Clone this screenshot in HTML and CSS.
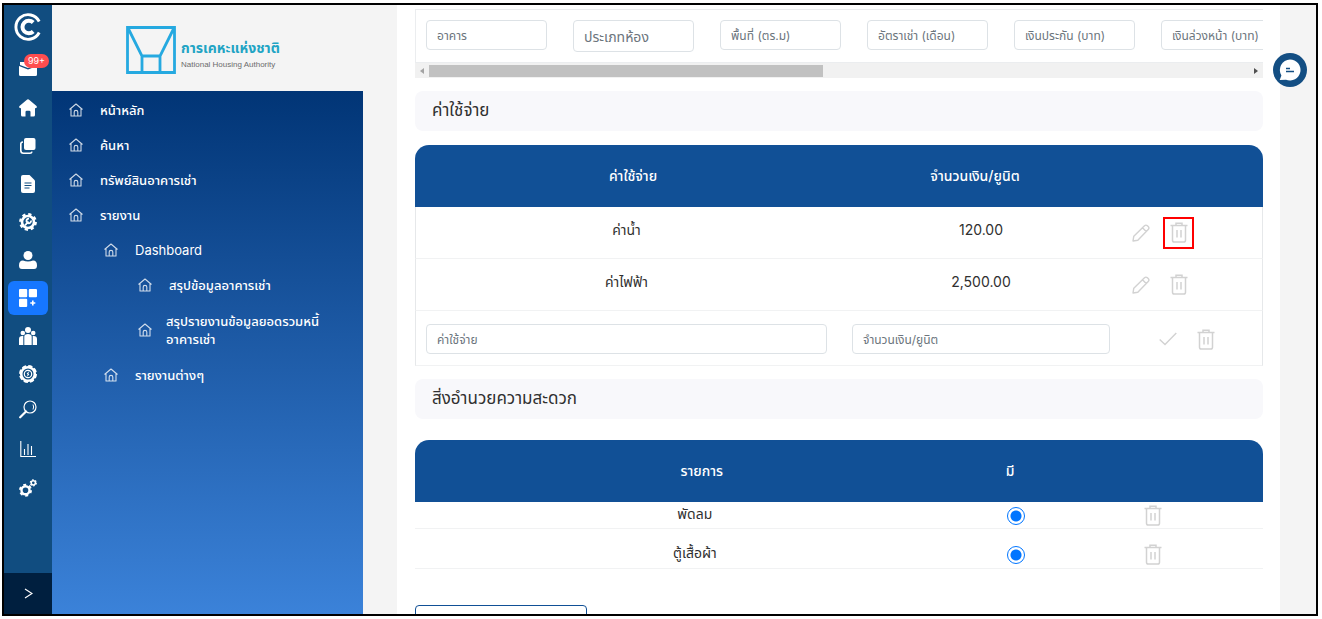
FILE: index.html
```html
<!DOCTYPE html>
<html lang="th">
<head>
<meta charset="utf-8">
<meta name="viewport" content="width=device-width, initial-scale=1">
<title>การเคหะแห่งชาติ</title>
<link rel="stylesheet" href="styles.css">
</head>
<body>
<svg width="0" height="0" class="sprite" aria-hidden="true">
  <symbol id="trash" viewBox="0 0 18 21"><path d="M.5 3.500h17M6 3V1.200h6V3M2.500 4v14.200c0 1.200.6 1.800 1.800 1.800h9.400c1.200 0 1.800-.6 1.800-1.800V4M7 8v7.500M11 8v7.500" fill="none" stroke="currentColor" stroke-width="1.500"/></symbol>
  <symbol id="pencil" viewBox="0 0 18 18"><path d="M1 17l.8-4.800L12.500 1.800c.9-.9 2-.9 2.900 0l.8.8c.9.9.9 2 0 2.900L5.800 16.200zM10.500 3.800l3.700 3.700" fill="none" stroke="currentColor" stroke-width="1.400" stroke-linejoin="round"/></symbol>
  <symbol id="check" viewBox="0 0 18 14"><path d="M.7 7.500l5.300 5L17.300 1" fill="none" stroke="currentColor" stroke-width="1.400"/></symbol>
  <symbol id="house" viewBox="0 0 14 14"><path d="M.5 6.500L7 1l6.500 5.500M2 5.500V13h10V5.500M5.200 13V9c0-1 .6-1.600 1.800-1.600S8.800 8 8.800 9v4" fill="none" stroke="currentColor" stroke-width="1.100" stroke-linejoin="round"/></symbol>
</svg>
<div class="frame">
  <nav class="rail" aria-label="เมนูหลัก">
    <a class="rail-logo" href="#" aria-label="โลโก้"><svg width="28" height="28" viewBox="0 0 28 28" fill="none" stroke="#fff"><path d="M25.200 8.500A12.300 12.300 0 1 0 25.200 19.500" stroke-width="2.900"/><path d="M19.200 9.500A6.300 6.300 0 1 0 19.200 18.500" stroke-width="4"/></svg></a>
    <a class="rail-mail" href="#"><svg width="18" height="14" viewBox="0 0 18 14" fill="#fff"><path d="M1 0h16v3l-8 3-8-3zM0 4l9 3.500L18 4v8.500q0 1.500-1.500 1.500h-15Q0 14 0 12.500z"/></svg><span class="badge">99+</span></a>
    <a class="rail-item" href="#" aria-label="หน้าแรก"><svg width="18" height="18" viewBox="0 0 18 18" fill="#fff"><path d="M7.600.9q1.400-1.200 2.800 0l6.800 5.900q1 .9.500 1.700t-1.700.6v6.900q0 1.500-1.500 1.500h-3v-4.500q0-1.300-1.300-1.300H7.800q-1.300 0-1.300 1.300v4.500h-3Q2 17.500 2 16V9.100Q.8 9.300.3 8.500t.5-1.700z"/></svg></a>
    <a class="rail-item" href="#" aria-label="สำเนา"><svg width="16" height="16" viewBox="0 0 16 16"><path d="M3 4Q.8 4.200.8 6v6.500q0 2.700 2.700 2.700H10q1.600 0 2-1.600" fill="none" stroke="#fff" stroke-width="1.600"/><rect x="4" y="0" width="11.500" height="12" rx="2" fill="#fff"/></svg></a>
    <a class="rail-item" href="#" aria-label="เอกสาร"><svg width="14" height="18" viewBox="0 0 14 18"><path d="M2 0h6.500L14 5.500V16q0 2-2 2H2q-2 0-2-2V2q0-2 2-2z" fill="#fff"/><path d="M3.500 8h7M3.500 10.500h7M3.500 13h5" stroke="#114d80" stroke-width="1.200"/></svg></a>
    <a class="rail-item" href="#" aria-label="บำรุงรักษา"><svg width="18" height="18" viewBox="0 0 18 18"><circle cx="9" cy="9" r="6" fill="none" stroke="#fff" stroke-width="2.600"/><circle cx="9" cy="9" r="7.700" fill="none" stroke="#fff" stroke-width="2.400" stroke-dasharray="3.200 2.848"/><path d="M6 12.300L9.500 8.500M12 7.500A2.300 2.300 0 1 1 10 5.700" fill="none" stroke="#fff" stroke-width="1.800"/></svg></a>
    <a class="rail-item" href="#" aria-label="ผู้ใช้"><svg width="18" height="18" viewBox="0 0 18 18" fill="#fff"><circle cx="9" cy="4.500" r="4.500"/><path d="M0 14.500q0-5 4-5 5 2 10 0 4 0 4 5 0 3.500-3 3.500H3q-3 0-3-3.500z"/></svg></a>
    <a class="rail-item is-active" href="#" aria-label="ทรัพย์สิน"><svg width="18" height="18" viewBox="0 0 18 18" fill="#fff"><rect width="8.200" height="8.200" rx="1"/><rect x="9.800" width="8.200" height="8.200" rx="1"/><rect y="9.800" width="8.200" height="8.200" rx="1"/><path d="M13 11.500h1.600v1.700h1.700v1.600h-1.700v1.700H13v-1.700h-1.700v-1.600H13z"/></svg></a>
    <a class="rail-item" href="#" aria-label="กลุ่ม"><svg width="18" height="18" viewBox="0 0 18 18" fill="#fff"><circle cx="9" cy="3" r="3"/><circle cx="3.800" cy="6" r="2.300"/><circle cx="14.200" cy="6" r="2.300"/><path d="M5.300 18V9.500Q5.300 7 9 7t3.700 2.500V18zM0 18v-6q0-3 3.200-3h1.100v9zM18 18v-6q0-3-3.200-3h-1.100v9z"/></svg></a>
    <a class="rail-item" href="#" aria-label="การเงิน"><svg width="18" height="18" viewBox="0 0 18 18"><circle cx="9" cy="9" r="6.800" fill="none" stroke="#fff" stroke-width="2.600"/><circle cx="9" cy="9" r="8" fill="none" stroke="#fff" stroke-width="2" stroke-dasharray="4.200 2.083"/><circle cx="9" cy="9" r="3.700" fill="none" stroke="#fff" stroke-width="1.200"/><path d="M10 6.500L8 9h2l-2 2.500" fill="none" stroke="#fff"/></svg></a>
    <a class="rail-item" href="#" aria-label="ค้นหา"><svg width="18" height="24" viewBox="0 0 18 24" fill="none" stroke="#fff"><circle cx="11" cy="7" r="6" stroke-width="1.200"/><path d="M14 4.500q1.300 2.500 0 5"/><path d="M7 11.500L1.200 17.300" stroke-width="2.200" stroke-linecap="round"/></svg></a>
    <a class="rail-item" href="#" aria-label="สถิติ"><svg width="16" height="18" viewBox="0 0 16 18" fill="none" stroke="#fff" stroke-width="1.100"><path d="M.8 0v15.500H16M4.500 14V8M8 14V3M11.500 14V5"/></svg></a>
    <a class="rail-item" href="#" aria-label="ตั้งค่า"><svg width="18" height="18" viewBox="0 0 18 18" fill="none" stroke="#fff"><circle cx="6.500" cy="11.200" r="4" stroke-width="2.400"/><circle cx="6.500" cy="11.200" r="5.500" stroke-width="2" stroke-dasharray="2.900 2.860"/><circle cx="14.300" cy="3.800" r="2.100" stroke-width="1.500"/><circle cx="14.300" cy="3.800" r="3" stroke-width="1.300" stroke-dasharray="1.600 1.542"/></svg></a>
    <button class="rail-toggle" type="button" aria-label="ขยายเมนู"><svg width="9" height="11" viewBox="0 0 9 11" fill="none" stroke="#fff" stroke-width="1.200"><path d="M1 1l7 4.500L1 10"/></svg></button>
  </nav>

  <aside class="sidebar">
    <header class="brand">
      <svg width="50" height="48" viewBox="0 0 50 48" fill="none" stroke="#25a9e0" stroke-width="2.800"><path d="M1.500 1.500h47v45h-47zM2 2l14 28v16M48 2L34 30v16M16 30h18"/></svg>
      <div><p class="brand-name">การเคหะแห่งชาติ</p><p class="brand-sub">National Housing Authority</p></div>
    </header>
    <ul class="menu">
      <li><a href="#"><svg><use href="#house"/></svg><span>หน้าหลัก</span></a></li>
      <li><a href="#"><svg><use href="#house"/></svg><span>ค้นหา</span></a></li>
      <li><a href="#"><svg><use href="#house"/></svg><span>ทรัพย์สินอาคารเช่า</span></a></li>
      <li><a href="#"><svg><use href="#house"/></svg><span>รายงาน</span></a>
        <ul>
          <li><a href="#"><svg><use href="#house"/></svg><span class="latin">Dashboard</span></a>
            <ul>
              <li><a href="#"><svg><use href="#house"/></svg><span>สรุปข้อมูลอาคารเช่า</span></a></li>
              <li><a class="two-line" href="#"><svg><use href="#house"/></svg><span>สรุปรายงานข้อมูลยอดรวมหนี้<br>อาคารเช่า</span></a></li>
            </ul>
          </li>
          <li><a href="#"><svg><use href="#house"/></svg><span>รายงานต่างๆ</span></a></li>
        </ul>
      </li>
    </ul>
  </aside>

  <main class="main">
    <div class="card">
      <div class="rooms">
        <input type="text" placeholder="อาคาร" aria-label="อาคาร">
        <input class="large" type="text" placeholder="ประเภทห้อง" aria-label="ประเภทห้อง">
        <input type="text" placeholder="พื้นที่ (ตร.ม)" aria-label="พื้นที่ (ตร.ม)">
        <input type="text" placeholder="อัตราเช่า (เดือน)" aria-label="อัตราเช่า (เดือน)">
        <input type="text" placeholder="เงินประกัน (บาท)" aria-label="เงินประกัน (บาท)">
        <input type="text" placeholder="เงินล่วงหน้า (บาท)" aria-label="เงินล่วงหน้า (บาท)">
      </div>
      <div class="scrollbar"><i class="arrow-left"></i><div class="track"><div class="thumb"></div></div><i class="arrow-right"></i></div>

      <h2 class="section">ค่าใช้จ่าย</h2>
      <table class="grid expenses">
        <colgroup><col class="c-name"><col class="c-amount"><col></colgroup>
        <thead><tr><th>ค่าใช้จ่าย</th><th>จำนวนเงิน/ยูนิต</th><th></th></tr></thead>
        <tbody>
          <tr><td>ค่าน้ำ</td><td>120.00</td><td><div class="actions"><button class="icon" type="button" aria-label="แก้ไข"><svg width="18" height="18"><use href="#pencil"/></svg></button><button class="icon marked" type="button" aria-label="ลบ"><svg width="18" height="21"><use href="#trash"/></svg></button></div></td></tr>
          <tr><td>ค่าไฟฟ้า</td><td>2,500.00</td><td><div class="actions"><button class="icon" type="button" aria-label="แก้ไข"><svg width="18" height="18"><use href="#pencil"/></svg></button><button class="icon" type="button" aria-label="ลบ"><svg width="18" height="21"><use href="#trash"/></svg></button></div></td></tr>
          <tr class="entry"><td><input type="text" placeholder="ค่าใช้จ่าย" aria-label="ค่าใช้จ่าย"></td><td><input type="text" placeholder="จำนวนเงิน/ยูนิต" aria-label="จำนวนเงิน/ยูนิต"></td><td><div class="actions"><button class="icon" type="button" aria-label="บันทึก"><svg width="18" height="14"><use href="#check"/></svg></button><button class="icon" type="button" aria-label="ลบ"><svg width="18" height="21"><use href="#trash"/></svg></button></div></td></tr>
        </tbody>
      </table>

      <h2 class="section">สิ่งอำนวยความสะดวก</h2>
      <table class="grid facilities">
        <colgroup><col class="c-item"><col class="c-has"><col></colgroup>
        <thead><tr><th>รายการ</th><th>มี</th><th></th></tr></thead>
        <tbody>
          <tr><td>พัดลม</td><td><input type="radio" name="fan" checked aria-label="พัดลม มี"></td><td><button class="icon" type="button" aria-label="ลบ"><svg width="18" height="21"><use href="#trash"/></svg></button></td></tr>
          <tr><td>ตู้เสื้อผ้า</td><td><input type="radio" name="wardrobe" checked aria-label="ตู้เสื้อผ้า มี"></td><td><button class="icon" type="button" aria-label="ลบ"><svg width="18" height="21"><use href="#trash"/></svg></button></td></tr>
        </tbody>
      </table>
      <button class="add" type="button">เพิ่มสิ่งอำนวยความสะดวก</button>
    </div>
    <button class="chat" type="button" aria-label="แชต"><svg width="34" height="34" viewBox="0 0 34 34"><circle cx="17" cy="17" r="17" fill="#134e83"/><path d="M17 6.500a10.500 10.500 0 1 1-4 20.200L6.700 27l1.700-4.500A10.500 10.500 0 0 1 17 6.500z" fill="#fff"/><path d="M13 15.500h4M13 18.500h8" stroke="#134e83" stroke-width="1.300"/></svg></button>
  </main>
</div>
</body>
</html>
```
FILE: styles.css
```css
* { box-sizing: border-box; }
body { margin: 0; padding: 3px 4px 3px 2px; height: 100vh; background: #fff; color: #303030; font: 14px/18px Inter, "Noto Sans Thai", "Noto Sans", sans-serif; }
button, input { font: inherit; }
button { cursor: pointer; }
a { color: inherit; text-decoration: none; }
ul { margin: 0; padding: 0; list-style: none; }
.sprite { position: absolute; }
.frame { display: flex; height: 100%; overflow: hidden; border: 2px solid #000; }

.rail { flex: none; display: flex; flex-direction: column; width: 48px; background: #114d80; }
.rail a { display: flex; align-items: center; justify-content: center; }
.rail-logo { height: 44px; }
.rail-mail { position: relative; height: 40px; }
.badge { position: absolute; top: 5px; right: 3px; padding: 0 4px; border-radius: 8px; background: #ff4d4f; color: #fff; font-size: 9px; line-height: 14px; }
.rail-item { height: 34px; margin: 2px 4px; border-radius: 6px; }
.rail-item.is-active { background: #1677ff; }
.rail-toggle { display: flex; align-items: center; justify-content: center; height: 41px; margin-top: auto; padding: 0; border: 0; background: #001f3f; }

.sidebar { flex: none; display: flex; flex-direction: column; width: 311px; }
.brand { display: flex; align-items: center; gap: 5px; height: 86px; padding: 4px 0 0 74px; background: #f4f4f4; }
.brand p { margin: 0; white-space: nowrap; }
.brand-name { padding-top: 10px; color: #22a4c4; font-size: 14px; font-weight: 700; line-height: 20px; }
.brand-sub { color: #6c6c6c; font-family: "Liberation Sans Narrow", "Liberation Sans", sans-serif; font-size: 8px; line-height: 14px; }
.menu { flex: 1; padding-top: 1px; background: linear-gradient(#013576, #3b82d9); color: #fff; font-size: 13px; font-weight: 500; }
.menu a { display: flex; align-items: center; gap: 17px; height: 35px; padding-left: 17px; }
.menu ul a { padding-left: 52px; }
.menu ul ul a { padding-left: 86px; }
.menu .two-line { gap: 14px; height: 55px; }
.menu svg { flex: none; width: 14px; height: 14px; opacity: .8; }
.latin { font-size: 13px; font-weight: 400; }

.main { position: relative; flex: 1; min-width: 0; padding: 0 36px 0 34px; background: #f4f4f4; }
.card { height: 100%; padding: 4px 17px 0 18px; overflow: hidden; background: #fff; }
.rooms { display: flex; align-items: flex-start; gap: 26px; height: 54px; padding: 10px; overflow: hidden; border: 1px solid #ebedef; border-right: 0; }
input[type="text"] { width: 100%; height: 30px; padding: 0 10px; border: 1px solid #dde2e6; border-radius: 4px; background: #fff; font-size: 12px; }
input::placeholder { color: #6c757d; opacity: 1; }
.rooms input[type="text"] { flex: none; width: 121px; }
.rooms input.large { height: 32px; font-size: 14px; }
.scrollbar { display: flex; align-items: center; height: 15px; padding: 0 5px; background: #f1f1f1; }
.track { flex: 1; margin: 0 5px; }
.thumb { width: 48%; height: 12px; background: #c1c1c1; }
.arrow-left, .arrow-right { border: 3px solid transparent; }
.arrow-left { border-left: 0; border-right: 4px solid #a3a3a3; }
.arrow-right { border-right: 0; border-left: 4px solid #505050; }
.section { margin: 13px 0 14px; padding: 9px 17px 11px; border-radius: 8px; background: #f8f8fb; font-size: 17px; font-weight: 400; line-height: 20px; }

.grid { width: 100%; border-spacing: 0; table-layout: fixed; }
.grid th { height: 62px; padding: 0; background: #115096; color: #fff; font-weight: 500; }
.grid th:first-child { padding-left: 14px; border-top-left-radius: 14px; }
.grid th:last-child { border-top-right-radius: 14px; }
.grid td { padding: 0; border-bottom: 1px solid #f1f2f3; text-align: center; }
.icon { display: inline-flex; align-items: center; justify-content: center; width: 31px; height: 32px; padding: 0; border: 2px solid transparent; background: none; color: #d2d2d2; }
.icon.marked { border-color: #f00; }
.actions { display: flex; gap: 7px; }
.expenses td:first-child { border-left: 1px solid #e6e8ea; }
.expenses td:last-child { padding-bottom: 0; border-right: 1px solid #e6e8ea; }
.c-name { width: 422px; }
.c-amount { width: 288px; }
.expenses th:nth-child(2) { padding-right: 12px; }
.expenses td { height: 52px; padding-bottom: 6px; }
.expenses .entry td { height: 55px; padding: 2px 10px 0; }
.expenses .entry td:nth-child(2) { padding: 2px 15px 0; }
.expenses .entry .actions { padding-left: 17px; }
.facilities { margin-top: 21px; }
.c-item { width: 66%; }
.c-has { width: 10%; }
.facilities th:nth-child(2) { padding-right: 14px; }
.facilities td { height: 27px; }
.facilities td:nth-child(2) { padding-right: 3px; }
.facilities td:first-child { padding-bottom: 3px; }
.facilities td:last-child { padding-right: 16px; }
.facilities tr + tr td { height: 40px; padding-top: 12px; }
.facilities .icon { height: 26px; vertical-align: middle; }
input[type="radio"] { appearance: none; width: 18px; height: 18px; margin: 0; border: 1px solid #0075ff; border-radius: 50%; background: radial-gradient(circle, #0075ff 5px, #fff 6px); vertical-align: middle; }
.add { width: 172px; height: 34px; margin-top: 36px; border: 1px solid #115096; border-radius: 4px; background: #fff; color: #303030; font-size: 12px; }
.chat { position: absolute; top: 48px; right: 9px; width: 34px; height: 34px; padding: 0; border: 0; border-radius: 50%; background: none; }
.chat svg { display: block; }
```
